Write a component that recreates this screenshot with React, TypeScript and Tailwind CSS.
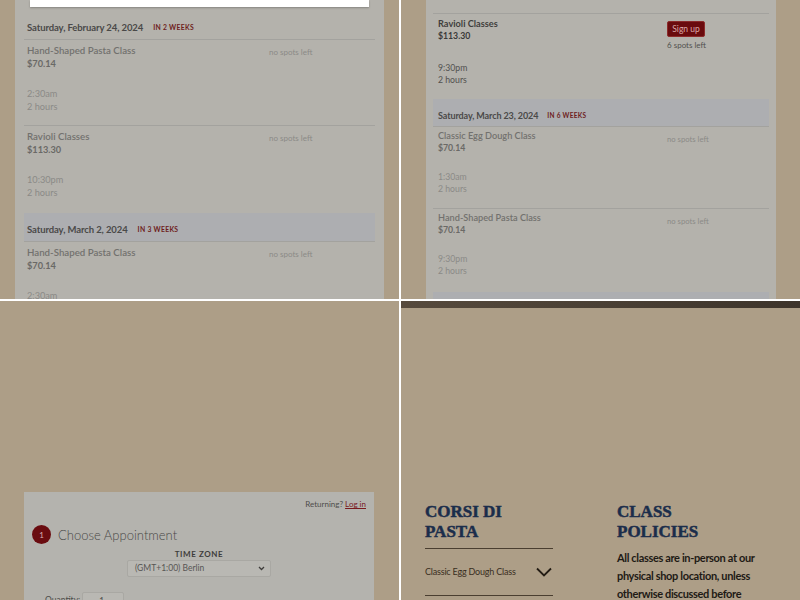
import React from "react";

const W = "font-['Lato','Noto_Sans',sans-serif]";

function Header({ date, when, band, big }: { date: string; when: string; band?: boolean; big?: boolean }) {
  return (
    <div
      className={`${big ? "h-[28px] pt-[10px] pl-[3px]" : "h-[27px] pt-[11px] pl-[5px]"} ${band ? "bg-[#adaeb1]" : ""} flex items-start`}
    >
      <span className={`${big ? "text-[9.5px] leading-[13px]" : "text-[9px] leading-[12px]"} font-bold tracking-[-0.1px] text-[#4a4948]`}>{date}</span>
      <span className={`${big ? "ml-[10px] text-[6.8px] leading-[13px]" : "ml-[9px] text-[6.5px] leading-[12px]"} font-bold uppercase tracking-[0.3px] text-[#6e1d20]`}>
        {when}
      </span>
    </div>
  );
}

function Item({
  name,
  price,
  time,
  big,
  avail,
  spacer,
  pb,
}: {
  name: string;
  price: string;
  time: string;
  big?: boolean;
  avail?: boolean;
  spacer: string;
  pb: string;
}) {
  const lh = big ? "leading-[13px]" : "leading-[12px]";
  const nameSize = big ? "text-[9.7px]" : "text-[9.2px]";
  const small = big ? "text-[9.2px]" : "text-[8.7px]";
  return (
    <div className={`border-t border-[#a3a29e] ${big ? "pl-[3px] pt-[4px]" : avail ? "pl-[5px] pt-[4px]" : "pl-[5px] pt-[3px]"} ${pb}`}>
      <div className={`grid ${big ? "grid-cols-[242px_1fr]" : "grid-cols-[229px_1fr]"}`}>
        <div>
          <div className={`${lh} ${nameSize} ${avail ? "font-bold text-[#3f3e3c]" : "font-semibold text-[#72716e]"}`}>{name}</div>
          <div className={`${lh} ${small} font-bold ${avail ? "text-[#3a3938]" : "text-[#6a6966]"}`}>{price}</div>
        </div>
        {avail ? (
          <div className="pt-[3px]">
            <div className="w-[38px] h-[16px] bg-[#6a0b0e] border border-[#8c2b2b] rounded-[2px] flex items-center justify-center text-[8.5px] text-[#dba8a8]">
              Sign up
            </div>
            <div className="mt-[2px] text-[8px] leading-[12px] text-[#52514f]">6 spots left</div>
          </div>
        ) : (
          <div className={`${big ? "pt-[2px] text-[8px]" : "pt-[3px] text-[7.7px]"} leading-[12px] text-[#8b8a87]`}>no spots left</div>
        )}
      </div>
      <div className={spacer} />
      <div className={`${lh} ${small} ${avail ? "text-[#52514f]" : "text-[#8b8a87]"}`}>{time}</div>
      <div className={`${lh} ${small} ${avail ? "text-[#52514f]" : "text-[#8b8a87]"}`}>2 hours</div>
    </div>
  );
}

function Q1() {
  return (
    <div className="h-full overflow-hidden bg-[#ad9e87] pl-[15px]">
      <div className={`w-[369px] h-full bg-[#b4b2ac] ${W}`}>
        <div className="mx-[15px] h-[7px] bg-white shadow-[0_1px_2px_rgba(0,0,0,0.25)]" />
        <div className="mx-[9px] mt-[4px]">
          <Header big date="Saturday, February 24, 2024" when="in 2 weeks" />
          <Item big name="Hand-Shaped Pasta Class" price="$70.14" time="2:30am" spacer="h-[17px]" pb="pb-[12px]" />
          <Item big name="Ravioli Classes" price="$113.30" time="10:30pm" spacer="h-[17px]" pb="pb-[12px]" />
          <div className="mt-[2px]">
            <Header big band date="Saturday, March 2, 2024" when="in 3 weeks" />
          </div>
          <Item big name="Hand-Shaped Pasta Class" price="$70.14" time="2:30am" spacer="h-[17px]" pb="pb-[12px]" />
        </div>
      </div>
    </div>
  );
}

function Q2() {
  return (
    <div className="h-full overflow-hidden bg-[#ad9e87] pl-[25px]">
      <div className={`w-[350px] h-full bg-[#b4b2ac] px-[7px] ${W}`}>
        <div className="h-[13px]" />
        <Item avail name="Ravioli Classes" price="$113.30" time="9:30pm" spacer="h-[11px]" pb="pb-[13px]" />
        <Header band date="Saturday, March 23, 2024" when="in 6 weeks" />
        <Item name="Classic Egg Dough Class" price="$70.14" time="1:30am" spacer="h-[17px]" pb="pb-[13px]" />
        <Item name="Hand-Shaped Pasta Class" price="$70.14" time="9:30pm" spacer="h-[17px]" pb="pb-[13px]" />
        <div className="mt-[2px] h-[27px] bg-[#adaeb1]" />
      </div>
    </div>
  );
}

function Q3() {
  return (
    <div className="h-full overflow-hidden bg-[#ad9e87] pl-[24px] pt-[191px]">
      <div className={`w-[350px] h-[120px] bg-[#b4b3ae] ${W}`}>
        <div className="pt-[7px] pr-[8px] text-right text-[8px] leading-[10px] text-[#4e4d4b]">
          Returning? <span className="text-[#7a1a1e] underline">Log in</span>
        </div>
        <div className="mt-[16px] pl-[8px] flex items-center gap-[7px]">
          <div className="w-[19px] h-[19px] rounded-full bg-[#6a0c10] flex items-center justify-center text-[8px] text-[#d9b0b0]">
            1
          </div>
          <div className="text-[13px] leading-[16px] font-light text-[#4a4948]">Choose Appointment</div>
        </div>
        <div className="mt-[5px] text-center text-[8px] leading-[10px] font-bold tracking-[0.6px] text-[#3e3d3b]">TIME ZONE</div>
        <div className="flex justify-center mt-[1px]">
          <div className="w-[144px] h-[17px] bg-[#b9b8b3] border border-[#a9a8a3] rounded-[2px] flex items-center justify-between pl-[7px] pr-[5px]">
            <span className="text-[8.5px] text-[#575654]">(GMT+1:00) Berlin</span>
            <svg width="7" height="5" viewBox="0 0 7 5">
              <path d="M1 1l2.5 2.5L6 1" stroke="#3e3d3b" strokeWidth="1.3" fill="none" />
            </svg>
          </div>
        </div>
        <div className="mt-[15px] pl-[21px] flex items-start gap-[2px]">
          <span className="pt-[3px] text-[8.5px] leading-[10px] text-[#4e4d4b]">Quantity:</span>
          <div className="w-[42px] h-[18px] bg-[#b9b8b3] border border-[#a9a8a3] rounded-[2px] pl-[16px] pt-[2px] text-[8.5px] text-[#4e4d4b]">
            1
          </div>
        </div>
      </div>
    </div>
  );
}

function Q4() {
  const heading =
    "font-['Liberation_Serif',serif] font-bold text-[17px] leading-[20px] text-[#1b2d4b] [-webkit-text-stroke:0.5px_#1b2d4b]";
  return (
    <div className="h-full overflow-hidden bg-[#ad9e87]">
      <div className="h-[7px] bg-gradient-to-r from-[#564a3d] via-[#4a4035] to-[#3d342b]" />
      <div className="pt-[194px] pl-[24px] flex gap-[64px]">
        <div className="w-[128px]">
          <div className={heading}>
            CORSI DI
            <br />
            PASTA
          </div>
          <div className="mt-[6px] border-t border-[#4a3e30]" />
          <div className="h-[46px] flex items-center justify-between pr-[1px]">
            <span className="font-['Lato',sans-serif] text-[9px] tracking-[-0.2px] text-[#3a2e22]">Classic Egg Dough Class</span>
            <svg width="16" height="10" viewBox="0 0 16 10">
              <path d="M1 1.5l7 7 7-7" stroke="#231c14" strokeWidth="1.8" fill="none" />
            </svg>
          </div>
          <div className="border-t border-[#4a3e30]" />
        </div>
        <div className="w-[160px]">
          <div className={heading}>
            CLASS
            <br />
            POLICIES
          </div>
          <div className="mt-[7px] font-['Lato',sans-serif] font-bold text-[11px] leading-[18px] tracking-[-0.35px] text-[#1e1a15]">
            All classes are in-person at our physical shop location, unless otherwise discussed before
          </div>
        </div>
      </div>
    </div>
  );
}

export default function App() {
  return (
    <div className="w-[800px] h-[600px] bg-white grid grid-cols-[399px_399px] grid-rows-[299px_299px] gap-[2px] overflow-hidden">
      <Q1 />
      <Q2 />
      <Q3 />
      <Q4 />
    </div>
  );
}
